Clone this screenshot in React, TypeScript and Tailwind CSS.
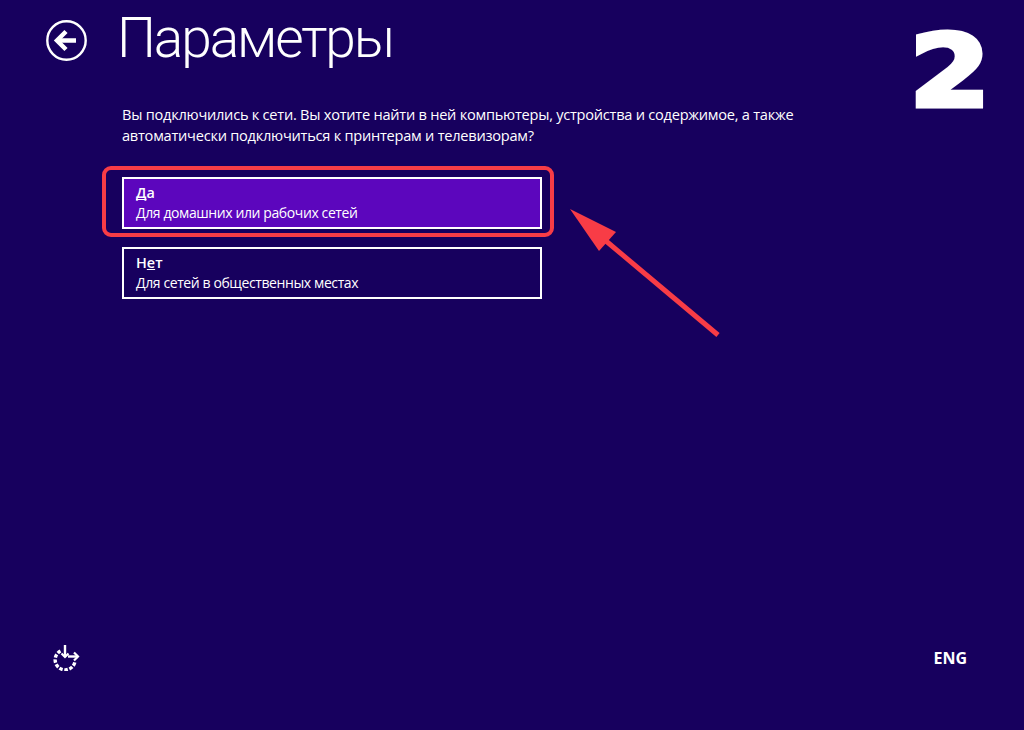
import React from "react";

const App = () => {
  return (
    <div className="relative flex flex-col w-[1024px] h-[730px] overflow-hidden bg-[#17005e] text-white font-['Open_Sans',sans-serif]">
      {/* header */}
      <header className="flex items-start pl-[46px] pr-[39px] h-[112px]">
        <svg className="w-[41px] h-[41px] mt-[20px] shrink-0" viewBox="0 0 41 41" fill="none">
          <circle cx="20.5" cy="20.5" r="19.2" stroke="white" strokeWidth="2.4" />
          <path d="M11 20.5H30" stroke="white" strokeWidth="4.5" />
          <path d="M20 11.5L11 20.5L20 29.5" stroke="white" strokeWidth="4.5" />
        </svg>
        <h1 className="ml-[30px] mt-[2px] text-[55px] leading-[72px] tracking-[-2.1px] font-light font-['Roboto',sans-serif]">Параметры</h1>
        <span className="ml-auto mt-[22px] text-[100px] leading-[100px] font-black font-['DejaVu_Sans',sans-serif] [-webkit-text-stroke:5px_white] scale-x-[1.16]">2</span>
      </header>

      {/* question + options */}
      <main className="pl-[122px]">
        <p className="w-[700px] text-[14.6px] leading-[21px] tracking-[-0.25px] -mt-[8px]">
          Вы подключились к сети. Вы хотите найти в ней компьютеры, устройства и содержимое, а также
          <br />
          автоматически подключиться к принтерам и телевизорам?
        </p>

        <div className="mt-[31px] flex flex-col gap-[18px] w-[420px]">
          <div className="relative">
            <button className="w-full h-[52px] border-2 border-white bg-[#5c06bd] pl-[12px] text-left flex flex-col justify-center">
              <span className="text-[14.4px] leading-[20px] font-semibold"><u className="[text-decoration-skip-ink:none]">Д</u>а</span>
              <span className="text-[14px] leading-[20px] tracking-[-0.4px]">Для домашних или рабочих сетей</span>
            </button>
            <div className="absolute -left-[20px] -top-[11px] w-[452px] h-[71px] rounded-[9px] border-[4px] border-[#f83c46]" />
          </div>
          <button className="w-full h-[52px] border-2 border-white pl-[12px] text-left flex flex-col justify-center">
            <span className="text-[14.4px] leading-[20px] font-semibold">Н<u className="[text-decoration-skip-ink:none]">е</u>т</span>
            <span className="text-[14px] leading-[20px] tracking-[-0.4px]">Для сетей в общественных местах</span>
          </button>
        </div>
      </main>

      {/* footer */}
      <footer className="mt-auto mb-[59px] flex items-center justify-between pl-[52px] pr-[57px]">
        <svg className="w-[28px] h-[27px]" viewBox="0 0 28 27" fill="none">
          <path d="M13 1V13" stroke="white" strokeWidth="2.4" />
          <path d="M9.5 9.5L13 13L16.5 9.5" stroke="white" strokeWidth="2.2" />
          <path d="M16 12.5H26" stroke="white" strokeWidth="2.4" />
          <path d="M22 8.5L26 12.5L22 16.5" stroke="white" strokeWidth="2.2" />
          <path d="M8.5 7A10 10 0 1 0 23 17.5" stroke="white" strokeWidth="3.4" strokeDasharray="3.5 1.6" />
        </svg>
        <span className="text-[16px] leading-[20px] font-bold">ENG</span>
      </footer>

      {/* red annotation arrow over the page */}
      <svg className="absolute inset-0 pointer-events-none" width="1024" height="730" viewBox="0 0 1024 730" fill="none">
        <path d="M718 335L606 241" stroke="#f83c46" strokeWidth="5" />
        <path d="M570 209L616 232L599 251Z" fill="#f83c46" />
      </svg>
    </div>
  );
};

export default App;
